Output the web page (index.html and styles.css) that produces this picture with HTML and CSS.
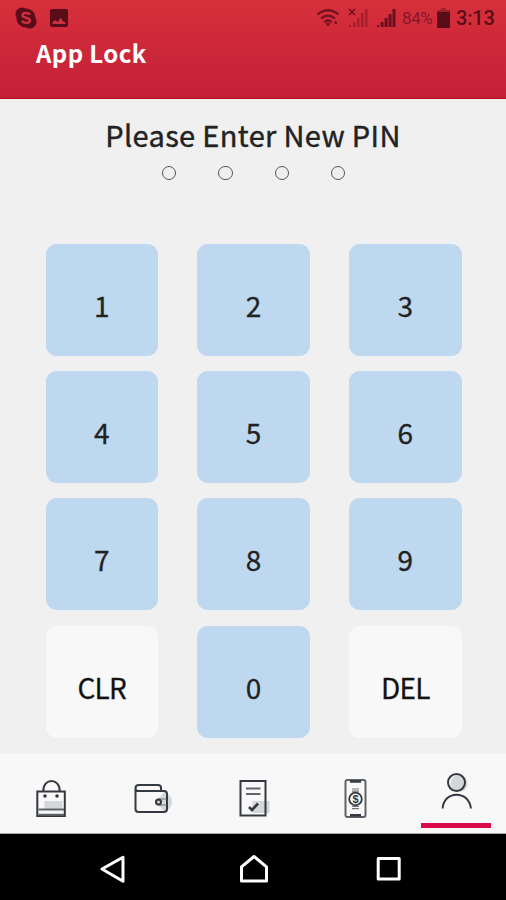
FILE: index.html
```html
<!DOCTYPE html>
<html lang="en">
<head>
    <meta charset="UTF-8">
    <meta name="viewport" content="width=device-width, initial-scale=1">
    <title>App Lock</title>
    <link rel="stylesheet" href="styles.css">
</head>

<body>
    <header class="header">
        <div class="status-bar">
            <div class="status-left">
                <svg width="22" height="22" viewBox="0 0 22 22">
                    <circle cx="7" cy="7" r="6.5" />
                    <circle cx="15" cy="15" r="6.5" />
                    <circle cx="11" cy="11" r="9.6" />
                    <path class="skype-s" d="M15 7.8C14 5.4 7.5 5.3 7.5 8.3C7.5 11.6 15 9.8 15 13.4C15 16.6 8 16.6 7 13.6" />
                </svg>
                <svg width="18" height="18" viewBox="0 0 18 18">
                    <rect width="18" height="18" rx="2" />
                    <path class="hill" d="M2.5 15V13L5.5 11L7 13L8.5 12L11 8.5L12.5 12L15.5 13.5V15Z" />
                </svg>
            </div>
            <div class="status-right">
                <svg class="wifi" width="24" height="20" viewBox="0 0 24 20">
                    <path d="M1.5 6.5Q12 -2 22.5 6.5M5 10.5Q12 4.7 19 10.5M8.3 14Q12 11 15.7 14" />
                    <path class="solid" d="M9.5 15.5Q12 13.8 14.5 15.5L12 18.5ZM18.5 13.5h2.5v2.5h-2.5z" />
                </svg>
                <svg class="signal-off" width="20" height="20" viewBox="0 0 20 20">
                    <path class="bars" d="M1 17h2v2H1zM5 14h2.5v5H5zM9 10h2.5v9H9zM13 5h2.5v14H13zM17 1h2.5v18H17z" />
                    <path class="cross" d="M1 1L7 7M7 1L1 7" />
                </svg>
                <svg class="signal" width="20" height="20" viewBox="0 0 20 20">
                    <path d="M1 17h2v2H1zM4.6 14h3v5h-3zM8.6 10h3v9h-3zM12.6 6h3v13h-3zM16.5 1h3v18h-3z" />
                </svg>
                <span class="percent">84%</span>
                <svg class="battery" width="13" height="20" viewBox="0 0 13 20">
                    <path class="cap" d="M4 0h5v2h4v4H0V2h4z" />
                    <rect y="4" width="13" height="16" rx="1" />
                </svg>
                <span class="time">3:13</span>
            </div>
        </div>
        <h1 class="title">App Lock</h1>
    </header>

    <main class="content">
        <p class="prompt">Please Enter New PIN</p>
        <div class="pin-dots">
            <span class="dot"></span>
            <span class="dot"></span>
            <span class="dot"></span>
            <span class="dot"></span>
        </div>
        <div class="keypad">
            <button class="key">1</button>
            <button class="key">2</button>
            <button class="key">3</button>
            <button class="key">4</button>
            <button class="key">5</button>
            <button class="key">6</button>
            <button class="key">7</button>
            <button class="key">8</button>
            <button class="key">9</button>
            <button class="key key-light">CLR</button>
            <button class="key">0</button>
            <button class="key key-light">DEL</button>
        </div>
    </main>

    <nav class="tabs">
        <a class="tab">
            <svg width="44" height="50" viewBox="-1.5 0 44 50">
                <path class="shade" d="M15 26h18v9H15z" />
                <path d="M7.8 16.5h27.5v24.5H7.8z" />
                <path class="gray" d="M9 34.5h25.5M9 39.8h25.5" />
                <path d="M13.8 16C13.8 2.5 30.2 2.5 30.2 16" />
                <circle class="solid" cx="15.5" cy="21" r="1.8" />
                <circle class="solid" cx="27.5" cy="21" r="1.8" />
            </svg>
        </a>
        <a class="tab">
            <svg width="44" height="50" viewBox="0 0 44 50">
                <path class="shade" d="M26 27L34 17Q42 20 42 27Q42 34 34 37Z" />
                <path d="M31 15.5V12.5Q31 10 28 10H9Q5.5 10 5.5 13V34Q5.5 37 8.5 37H34Q37 37 37 34V19Q37 16 34 16H8Q5.5 16 5.5 13" />
                <path d="M36.5 24H29Q26.3 24 26.3 27T29 30H36.5" class="thin" />
                <circle cx="28.5" cy="27" r="2.5" />
            </svg>
        </a>
        <a class="tab">
            <svg width="44" height="50" viewBox="-.5 0 44 50">
                <path class="shade" d="M21 26h17v12H21z" />
                <path d="M9 6h25v34.5H9z" />
                <path class="gray" d="M14.5 13.5h14.5M14.5 19h14.5" />
                <path class="check" d="M17.5 32L20.5 35L26.5 28.5" />
            </svg>
        </a>
        <a class="tab">
            <svg width="44" height="50" viewBox="0 0 44 50">
                <rect class="gray" x="12.5" y="5" width="20" height="37" rx="2" />
                <path class="bar" d="M17 6.5h11M17 40.3h11" />
                <path class="thin" d="M19 14h7M19 16.2h7M19 31.5h7M19 33.7h7" />
                <circle class="coin" cx="22.5" cy="24" r="6.3" />
                <text class="dollar" x="22.5" y="28">$</text>
            </svg>
        </a>
        <a class="tab active">
            <svg width="44" height="50" viewBox="-1 -.5 44 50">
                <circle class="shade" cx="24" cy="15" r="8.5" />
                <circle cx="21.5" cy="14" r="8.5" />
                <path d="M7.6 40C9 21.5 34 21.5 35.9 40" />
            </svg>
        </a>
    </nav>

    <footer class="android-nav">
        <svg width="28" height="30" viewBox="0 0 28 30">
            <path d="M3 14L24 2.3V26.3Z" />
        </svg>
        <svg width="30" height="30" viewBox="-3 0 30 30">
            <path d="M2.5 11.8L15 1.5L27.5 11.8V26H2.5Z" />
        </svg>
        <svg width="28" height="30" viewBox="0 0 28 30">
            <path d="M3.2 3.5h21v20.5h-21z" />
        </svg>
    </footer>
</body>

</html>
```
FILE: styles.css
```css
* {
    box-sizing: border-box;
}

body {
    margin: 0;
    width: 506px;
    height: 900px;
    display: flex;
    flex-direction: column;
    background-color: #f0f0f0;
    font-family: "Noto Sans CJK SC", "Noto Sans", sans-serif;
    overflow: hidden;
}

svg {
    display: block;
    flex-shrink: 0;
    overflow: visible;
}

/* header */
.header {
    height: 99px;
    background: linear-gradient(#d7303b, #c31f38);
    border-bottom: 1px solid #b3101f;
}

.status-bar {
    height: 36px;
    padding: 0 12px 0 15px;
    display: flex;
    justify-content: space-between;
    align-items: center;
    fill: #590d18;
    color: #590d18;
    font-family: Roboto, sans-serif;
}

.status-left {
    display: flex;
    align-items: center;
    gap: 13px;
}

.skype-s {
    fill: none;
    stroke: #cf3040;
    stroke-width: 2.4;
}

.hill {
    fill: #cf3040;
}

.status-right {
    display: flex;
    align-items: center;
}

.wifi {
    fill: none;
    stroke: #701321;
    stroke-width: 2.2;
    margin-right: 8px;
}

.wifi .solid {
    fill: #701321;
    stroke: none;
}

.signal-off {
    margin-right: 8px;
}

.bars {
    fill: #a32030;
}

.cross {
    stroke: #701321;
    stroke-width: 1.6;
}

.signal {
    fill: #681020;
    margin-right: 6px;
}

.percent {
    width: 31px;
    font-size: 17px;
    letter-spacing: -0.4px;
    color: #85182a;
    margin-right: 4px;
}

.battery {
    margin-right: 6px;
}

.cap {
    fill: #9a2231;
}

.time {
    width: 38px;
    font-size: 20px;
    font-weight: 500;
    letter-spacing: -0.2px;
    white-space: nowrap;
}

.title {
    margin: 0 0 0 36px;
    font-size: 24px;
    line-height: 34px;
    font-weight: 700;
    letter-spacing: 0.4px;
    color: #fff;
}

/* pin entry */
.content {
    height: 655px;
    padding-top: 15px;
}

.prompt {
    margin: 0;
    text-align: center;
    font-size: 29px;
    line-height: 40px;
    letter-spacing: 0.35px;
    color: #222;
    -webkit-text-stroke: 0.4px #222;
}

.pin-dots {
    margin: 12px 0 0 1px;
    display: flex;
    justify-content: center;
    gap: 42px;
}

.dot {
    width: 14.4px;
    height: 14.4px;
    border: 1.5px solid #555;
    border-radius: 50%;
}

.keypad {
    margin: 63.2px 44px 0 45.5px;
    display: grid;
    grid-template-columns: repeat(3, 112.5px);
    grid-auto-rows: 112px;
    gap: 15.4px 39.3px;
}

.key {
    padding: 10px 0 0;
    border: none;
    border-radius: 11px;
    background-color: #bed8ef;
    font-family: inherit;
    font-size: 28px;
    line-height: 40px;
    color: #222;
    -webkit-text-stroke: 0.3px #222;
}

.key-light {
    background-color: #f8f8f8;
    letter-spacing: -0.8px;
    color: #111;
}

/* bottom tabs */
.tabs {
    height: 80px;
    padding: 0 15px;
    display: flex;
    justify-content: space-between;
    background-color: #f8f8f8;
    border-bottom: 1px solid #aaa;
}

.tab {
    width: 70px;
    height: 75px;
    padding-top: 21px;
    display: flex;
    justify-content: center;
}

.tab svg {
    fill: none;
    stroke: #343840;
    stroke-width: 2;
}

.tab .shade {
    fill: #d4d7d8;
    stroke: none;
}

.tab .solid {
    fill: #343840;
    stroke: none;
}

.tab .gray {
    stroke: #606367;
}

.tab .thin {
    stroke: #777;
    stroke-width: 1.2;
}

.tab .bar,
.tab .check {
    stroke-width: 2.6;
}

.tab .coin {
    stroke-width: 1.8;
}

.tab .dollar {
    fill: #343840;
    stroke: none;
    font: 700 11px "Liberation Sans", sans-serif;
    text-anchor: middle;
}

.active {
    height: 74px;
    padding-top: 14px;
    border-bottom: 5px solid #d90b4b;
}

/* system buttons */
.android-nav {
    height: 66px;
    padding: 21px 103px 0 99px;
    display: flex;
    justify-content: space-between;
    background-color: #000;
}

.android-nav svg {
    fill: none;
    stroke: #fff;
    stroke-width: 3;
    stroke-linejoin: round;
}
```
